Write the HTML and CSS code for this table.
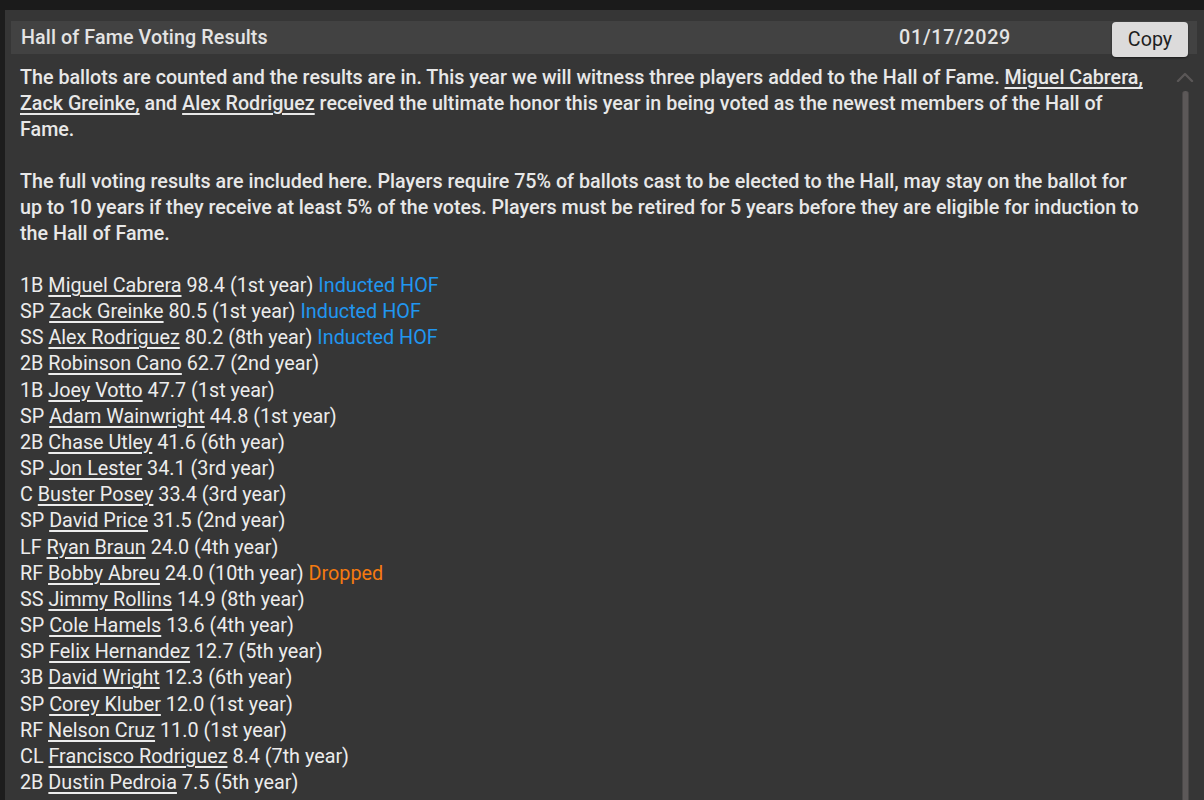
FILE: index.html
```html
<!DOCTYPE html>
<html>
<head>
<meta charset="utf-8">
<link rel="stylesheet" href="styles.css">
</head>
<body>
<div class="topbar"></div>
<div class="panel">
  <div class="header">
    <div class="title">Hall of Fame Voting Results</div>
    <div class="date">01/17/2029</div>
    <button class="copy">Copy</button>
  </div>
  <div class="body">
    <div class="content">
      <p class="para">The ballots are counted and the results are in. This year we will witness three players added to the Hall of Fame. <u>Miguel Cabrera,</u> <u>Zack Greinke,</u> and <u>Alex Rodriguez</u> received the ultimate honor this year in being voted as the newest members of the Hall of Fame.</p>
      <p class="para">The full voting results are included here. Players require 75% of ballots cast to be elected to the Hall, may stay on the ballot for up to 10 years if they receive at least 5% of the votes. Players must be retired for 5 years before they are eligible for induction to the Hall of Fame.</p>
      <ul class="list">
        <li>1B <u>Miguel Cabrera</u> 98.4 (1st year) <span class="hof">Inducted HOF</span></li>
        <li>SP <u>Zack Greinke</u> 80.5 (1st year) <span class="hof">Inducted HOF</span></li>
        <li>SS <u>Alex Rodriguez</u> 80.2 (8th year) <span class="hof">Inducted HOF</span></li>
        <li>2B <u>Robinson Cano</u> 62.7 (2nd year)</li>
        <li>1B <u>Joey Votto</u> 47.7 (1st year)</li>
        <li>SP <u>Adam Wainwright</u> 44.8 (1st year)</li>
        <li>2B <u>Chase Utley</u> 41.6 (6th year)</li>
        <li>SP <u>Jon Lester</u> 34.1 (3rd year)</li>
        <li>C <u>Buster Posey</u> 33.4 (3rd year)</li>
        <li>SP <u>David Price</u> 31.5 (2nd year)</li>
        <li>LF <u>Ryan Braun</u> 24.0 (4th year)</li>
        <li>RF <u>Bobby Abreu</u> 24.0 (10th year) <span class="drop">Dropped</span></li>
        <li>SS <u>Jimmy Rollins</u> 14.9 (8th year)</li>
        <li>SP <u>Cole Hamels</u> 13.6 (4th year)</li>
        <li>SP <u>Felix Hernandez</u> 12.7 (5th year)</li>
        <li>3B <u>David Wright</u> 12.3 (6th year)</li>
        <li>SP <u>Corey Kluber</u> 12.0 (1st year)</li>
        <li>RF <u>Nelson Cruz</u> 11.0 (1st year)</li>
        <li>CL <u>Francisco Rodriguez</u> 8.4 (7th year)</li>
        <li>2B <u>Dustin Pedroia</u> 7.5 (5th year)</li>
      </ul>
    </div>
    <div class="scrollbar">
      <svg class="arrow" width="18" height="10" viewBox="0 0 18 10"><path d="M2 9 L9 2 L16 9" fill="none" stroke="#5a5757" stroke-width="2.4" stroke-linecap="round" stroke-linejoin="round"/></svg>
      <div class="track"></div>
    </div>
  </div>
</div>
</body>
</html>
```

FILE: styles.css
```css
* { box-sizing: border-box; }
html, body {
  margin: 0;
  padding: 0;
  height: 800px;
  overflow: hidden;
  background: #1d1d1d;
  font-family: Roboto, "Liberation Sans", sans-serif;
}
.topbar {
  height: 10px;
  background: #1b1b1b;
}
.panel {
  margin-left: 5px;
  height: 790px;
  background: #363636;
  padding: 11px 7px 0 6px;
  display: flex;
  flex-direction: column;
}
.header {
  height: 33px;
  background: #424242;
  display: flex;
  align-items: center;
  padding-left: 10px;
  position: relative;
}
.title {
  flex: 1;
  color: #e4e4e4;
  font-size: 19.7px;
  font-weight: 500;
  letter-spacing: 0.1px;
}
.date {
  color: #e4e4e4;
  font-size: 19.7px;
  font-weight: 500;
  letter-spacing: 0.7px;
  margin-right: 186px;
}
.copy {
  position: absolute;
  right: 9px;
  top: 1px;
  width: 76px;
  height: 35px;
  background: #dcdbdb;
  border: none;
  border-radius: 4px;
  box-shadow: 0 1px 2px rgba(0,0,0,0.5);
  color: #1e1e1e;
  font-family: Roboto, "Liberation Sans", sans-serif;
  font-size: 19.7px;
  font-weight: 400;
  padding: 0;
}
.body {
  flex: 1;
  display: flex;
  min-height: 0;
  padding-top: 11px;
}
.content {
  flex: 1;
  padding-left: 9px;
  padding-right: 23px;
  color: #e8e8e8;
  font-size: 19.7px;
  line-height: 26px;
  overflow: hidden;
}
.para {
  margin: 0 0 26px 0;
  font-weight: 500;
}
.list {
  list-style: none;
  margin: 2px 0 0 0;
  padding: 0;
}
.list li { font-weight: 400; font-size: 19.8px; line-height: 26.15px; color: #ececec; }
u {
  text-decoration: underline;
  text-underline-offset: 3px;
  text-decoration-thickness: 1.5px;
}
.hof { color: #2196f0; }
.drop { color: #f57a10; }
.scrollbar {
  width: 24px;
  display: flex;
  flex-direction: column;
  align-items: center;
  padding-top: 7px;
}
.arrow { display: block; }
.track {
  margin-top: 9px;
  width: 7px;
  flex: 1;
  background: #5c5858;
  border-left: 1px solid #4a4747;
  border-right: 1px solid #4a4747;
  border-radius: 3px 3px 0 0;
}
```
